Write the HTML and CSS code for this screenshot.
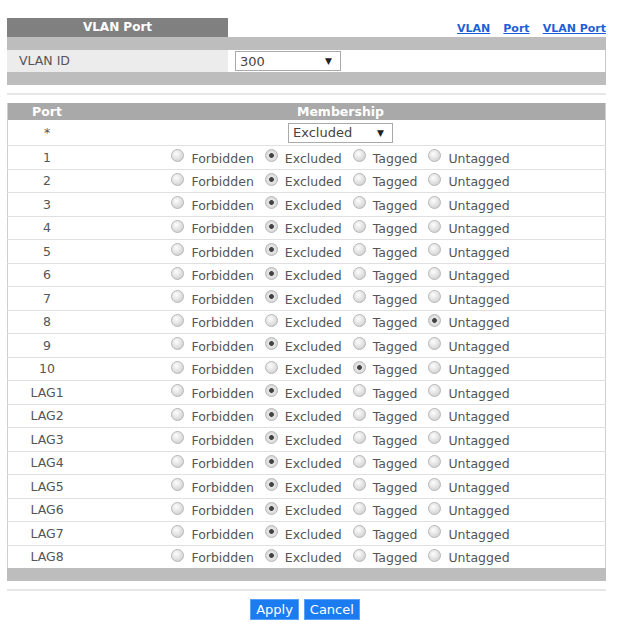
FILE: index.html
```html
<!DOCTYPE html>
<html lang="en">
<head>
    <meta charset="UTF-8">
    <title>VLAN Port</title>
    <link rel="stylesheet" href="styles.css">
</head>
<body>
    <div class="page">
        <div class="topbar">
            <div class="tab">VLAN Port</div>
            <div class="links">
                <a href="#">VLAN</a>
                <a href="#">Port</a>
                <a href="#">VLAN Port</a>
            </div>
        </div>

        <div class="panel">
            <div class="bar"></div>
            <div class="field-row">
                <div class="field-label">VLAN ID</div>
                <div class="field-value">
                    <div class="select select-vlan"><span>300</span><span class="arrow">&#9660;</span></div>
                </div>
            </div>
            <div class="bar"></div>
        </div>

        <div class="rule"></div>

        <table class="ports">
            <thead>
                <tr>
                    <th class="col-port">Port</th>
                    <th class="col-member">Membership</th>
                </tr>
            </thead>
            <tbody id="portRows">
                <tr class="all-row">
                    <td class="col-port">*</td>
                    <td class="col-member">
                        <div class="select select-all"><span>Excluded</span><span class="arrow">&#9660;</span></div>
                    </td>
                </tr>
            </tbody>
        </table>
        <div class="bar"></div>

        <div class="rule"></div>

        <div class="actions">
            <button class="btn">Apply</button>
            <button class="btn">Cancel</button>
        </div>
    </div>

    <script>
        const portRows = document.getElementById('portRows');

        const ports = [
            { name: '1', value: 'excluded' },
            { name: '2', value: 'excluded' },
            { name: '3', value: 'excluded' },
            { name: '4', value: 'excluded' },
            { name: '5', value: 'excluded' },
            { name: '6', value: 'excluded' },
            { name: '7', value: 'excluded' },
            { name: '8', value: 'untagged' },
            { name: '9', value: 'excluded' },
            { name: '10', value: 'tagged' },
            { name: 'LAG1', value: 'excluded' },
            { name: 'LAG2', value: 'excluded' },
            { name: 'LAG3', value: 'excluded' },
            { name: 'LAG4', value: 'excluded' },
            { name: 'LAG5', value: 'excluded' },
            { name: 'LAG6', value: 'excluded' },
            { name: 'LAG7', value: 'excluded' },
            { name: 'LAG8', value: 'excluded' }
        ];

        const options = [
            { value: 'forbidden', label: 'Forbidden' },
            { value: 'excluded', label: 'Excluded' },
            { value: 'tagged', label: 'Tagged' },
            { value: 'untagged', label: 'Untagged' }
        ];

        ports.forEach(port => {
            const row = document.createElement('tr');
            const choices = options.map(opt => `
                <label class="choice">
                    <input type="radio" name="port${port.name}" value="${opt.value}" ${opt.value === port.value ? 'checked' : ''}>
                    <span>${opt.label}</span>
                </label>`).join('');
            row.innerHTML = `
                <td class="col-port">${port.name}</td>
                <td class="col-member"><div class="choices">${choices}</div></td>
            `;
            portRows.appendChild(row);
        });
    </script>
</body>
</html>
```

FILE: styles.css
```css
body {
    margin: 0;
    padding: 0;
    background-color: #fff;
    font-family: 'DejaVu Sans', sans-serif;
    font-size: 12.5px;
    color: #555;
}

.page {
    width: 599px;
    margin-left: 7px;
    padding-top: 18px;
}

.topbar {
    display: flex;
    justify-content: space-between;
    align-items: flex-end;
}

.tab {
    width: 221px;
    height: 19px;
    line-height: 19px;
    background-color: #808080;
    color: #fff;
    font-weight: bold;
    font-size: 12px;
    text-align: center;
}

.links {
    display: flex;
    gap: 13px;
    padding-bottom: 2px;
}

.links a {
    color: #1f5fd6;
    font-weight: bold;
    font-size: 11px;
    text-decoration: underline;
}

.bar {
    height: 13px;
    background-color: #bdbdbd;
}

.field-row {
    display: flex;
    height: 22px;
    border-right: 1px solid #c8c8c8;
}

.field-label {
    width: 209px;
    padding-left: 12px;
    background-color: #ececec;
    line-height: 22px;
    color: #555;
}

.field-value {
    flex: 1;
    display: flex;
    align-items: center;
    padding-left: 7px;
}

.select {
    display: flex;
    justify-content: space-between;
    align-items: center;
    box-sizing: border-box;
    height: 20px;
    padding: 0 8px 0 4px;
    border: 1px solid #aaa;
    background-color: #fff;
    color: #444;
    font-size: 13px;
}

.select .arrow {
    font-size: 9px;
    color: #222;
}

.select-vlan {
    width: 106px;
}

.select-all {
    width: 105px;
    margin: 0 auto;
}

.rule {
    height: 2px;
    background-color: #e6e6e6;
    margin: 8px 0;
}

.ports {
    width: 100%;
    border-collapse: collapse;
    border-left: 1px solid #cfcfcf;
    border-right: 1px solid #cfcfcf;
}

.ports th {
    height: 17px;
    padding: 0;
    background-color: #a9a9a9;
    color: #fff;
    font-weight: bold;
    font-size: 12.5px;
    line-height: 17px;
}

.ports td {
    height: 22.5px;
    padding: 0;
    border-top: 1px solid #e0e0e0;
    text-align: center;
    color: #555;
}

.ports tr.all-row td {
    height: 25px;
    border-top: none;
}

.ports .col-port {
    width: 78px;
}

.ports .col-member {
    padding-right: 10px;
}

.choices {
    display: flex;
    justify-content: center;
    gap: 11px;
}

.choice {
    display: flex;
    align-items: center;
    gap: 7px;
}

.choice input {
    -webkit-appearance: none;
    appearance: none;
    width: 13px;
    height: 13px;
    margin: 0 0 3px 0;
    border: 1px solid #b8b8b8;
    border-radius: 50%;
    background: radial-gradient(circle at 40% 35%, #fdfdfd 0%, #e0e0e0 55%, #c4c4c4 100%);
}

.choice input:checked {
    background: radial-gradient(circle, #444 0%, #444 26%, #e6e6e6 36%, #cfcfcf 100%);
}

.choice span {
    padding-top: 2px;
}

.actions {
    display: flex;
    justify-content: center;
    gap: 5px;
    padding-right: 3px;
}

.btn {
    height: 21px;
    padding: 0 5px;
    background-color: #1b7cf2;
    border: 1px solid #5aa2f7;
    color: #fff;
    font-family: 'DejaVu Sans', sans-serif;
    font-size: 13px;
}
```
